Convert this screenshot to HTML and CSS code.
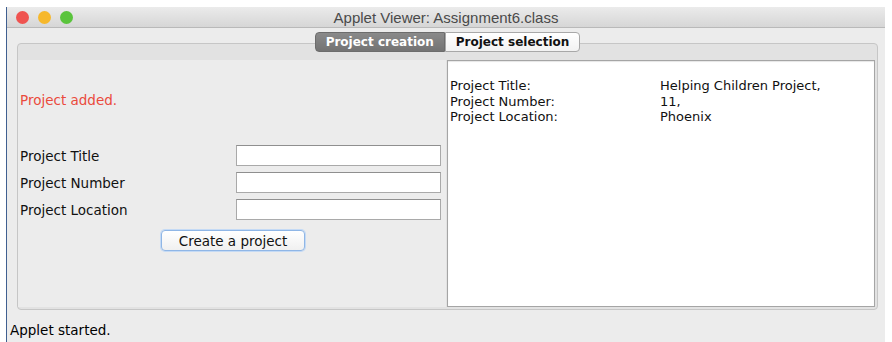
FILE: index.html
```html
<!DOCTYPE html>
<html lang="en">
<head>
    <meta charset="UTF-8">
    <title>Applet Viewer: Assignment6.class</title>
    <link rel="stylesheet" href="styles.css">
</head>
<body>
    <div class="window">
        <div class="titlebar">
            <div class="lights">
                <span class="light close"></span>
                <span class="light minimize"></span>
                <span class="light zoom"></span>
            </div>
            <div class="title">Applet Viewer: Assignment6.class</div>
        </div>

        <div class="applet">
            <div class="tabs">
                <div class="tab active">Project creation</div>
                <div class="tab">Project selection</div>
            </div>

            <div class="tab-pane">
                <div class="form-panel">
                    <div class="message">Project added.</div>
                    <div class="fields">
                        <label>Project Title</label>
                        <input type="text" class="field">
                        <label>Project Number</label>
                        <input type="text" class="field">
                        <label>Project Location</label>
                        <input type="text" class="field">
                    </div>
                    <button class="create-btn">Create a project</button>
                </div>

                <div class="output">
                    <div class="output-rows">
                        <span>Project Title:</span><span>Helping Children Project,</span>
                        <span>Project Number:</span><span>11,</span>
                        <span>Project Location:</span><span>Phoenix</span>
                    </div>
                </div>
            </div>

            <div class="status">Applet started.</div>
        </div>
    </div>
</body>
</html>
```

FILE: styles.css
```css
body {
    margin: 0;
    background-color: #fff;
    font-family: 'DejaVu Sans', Verdana, sans-serif;
    font-size: 13.5px;
    color: #111;
    overflow: hidden;
}
.window {
    margin: 7px 0 0 6px;
    width: 878px;
    height: 335px;
    background-color: #ececec;
    border-left: 1px solid #3f5f90;
    display: flex;
    flex-direction: column;
}
.titlebar {
    height: 20px;
    flex-shrink: 0;
    position: relative;
    background: linear-gradient(#ebebeb, #d6d6d6);
    border-bottom: 1px solid #b9b9b9;
    display: flex;
    align-items: center;
    justify-content: center;
}
.lights {
    position: absolute;
    left: 9px;
    top: 4px;
    display: flex;
    gap: 9px;
}
.light {
    width: 13px;
    height: 13px;
    border-radius: 50%;
}
.close { background-color: #ef5350; }
.minimize { background-color: #f6b82c; }
.zoom { background-color: #5ac43c; }
.title {
    font-family: 'Liberation Sans', Arial, sans-serif;
    font-size: 15px;
    color: #4a4a4a;
}
.applet {
    flex: 1;
    display: flex;
    flex-direction: column;
    padding: 4px 7px 0 10px;
}
.tabs {
    display: flex;
    justify-content: center;
    position: relative;
    z-index: 1;
}
.tab {
    height: 18px;
    line-height: 18px;
    padding: 0 10px;
    font-size: 12px;
    font-weight: bold;
    background: linear-gradient(#ffffff, #f2f2f2);
    border: 1px solid #a8a8a8;
    border-radius: 0 4px 4px 0;
    color: #111;
}
.tab.active {
    background: linear-gradient(#8a8a8a, #737373);
    border-color: #6c6c6c;
    border-radius: 4px 0 0 4px;
    color: #fff;
}
.tab-pane {
    box-sizing: border-box;
    margin-top: -9px;
    height: 267px;
    flex-shrink: 0;
    background-color: #e2e2e2;
    border: 1px solid #c6c6c6;
    border-radius: 4px;
    padding: 16px 2px 2px 0;
    display: grid;
    grid-template-columns: 1fr 428px;
    gap: 1px;
}
.form-panel {
    background-color: #ececec;
    display: flex;
    flex-direction: column;
    padding-left: 2px;
}
.message {
    color: #ea4a3c;
    margin-top: 32px;
    line-height: 16px;
}
.fields {
    margin-top: 37px;
    display: grid;
    grid-template-columns: 216px 205px;
    row-gap: 6px;
    align-items: center;
}
.field {
    box-sizing: border-box;
    width: 205px;
    height: 21px;
    margin: 0;
    border: 1px solid #a9a9a9;
    border-top-color: #8f8f8f;
    background-color: #fff;
}
.create-btn {
    align-self: center;
    margin: 10px 0 0 0;
    width: 144px;
    height: 21px;
    padding: 0;
    font-family: 'DejaVu Sans', Verdana, sans-serif;
    font-size: 13.5px;
    color: #111;
    background: linear-gradient(#ffffff, #f0f0f0);
    border: 1px solid #8fb6e6;
    border-radius: 4px;
    box-shadow: 0 0 0 1px #c4daf5;
}
.output {
    background-color: #fff;
    border: 1px solid #a5a5a5;
    box-shadow: inset 0 1px 1px rgba(0, 0, 0, 0.1);
    padding: 17px 0 0 2px;
}
.output-rows {
    display: grid;
    grid-template-columns: 210px auto;
    line-height: 15.5px;
    font-size: 13px;
}
.status {
    margin-top: 12px;
    margin-left: -7px;
    line-height: 16px;
    color: #000;
}
```
